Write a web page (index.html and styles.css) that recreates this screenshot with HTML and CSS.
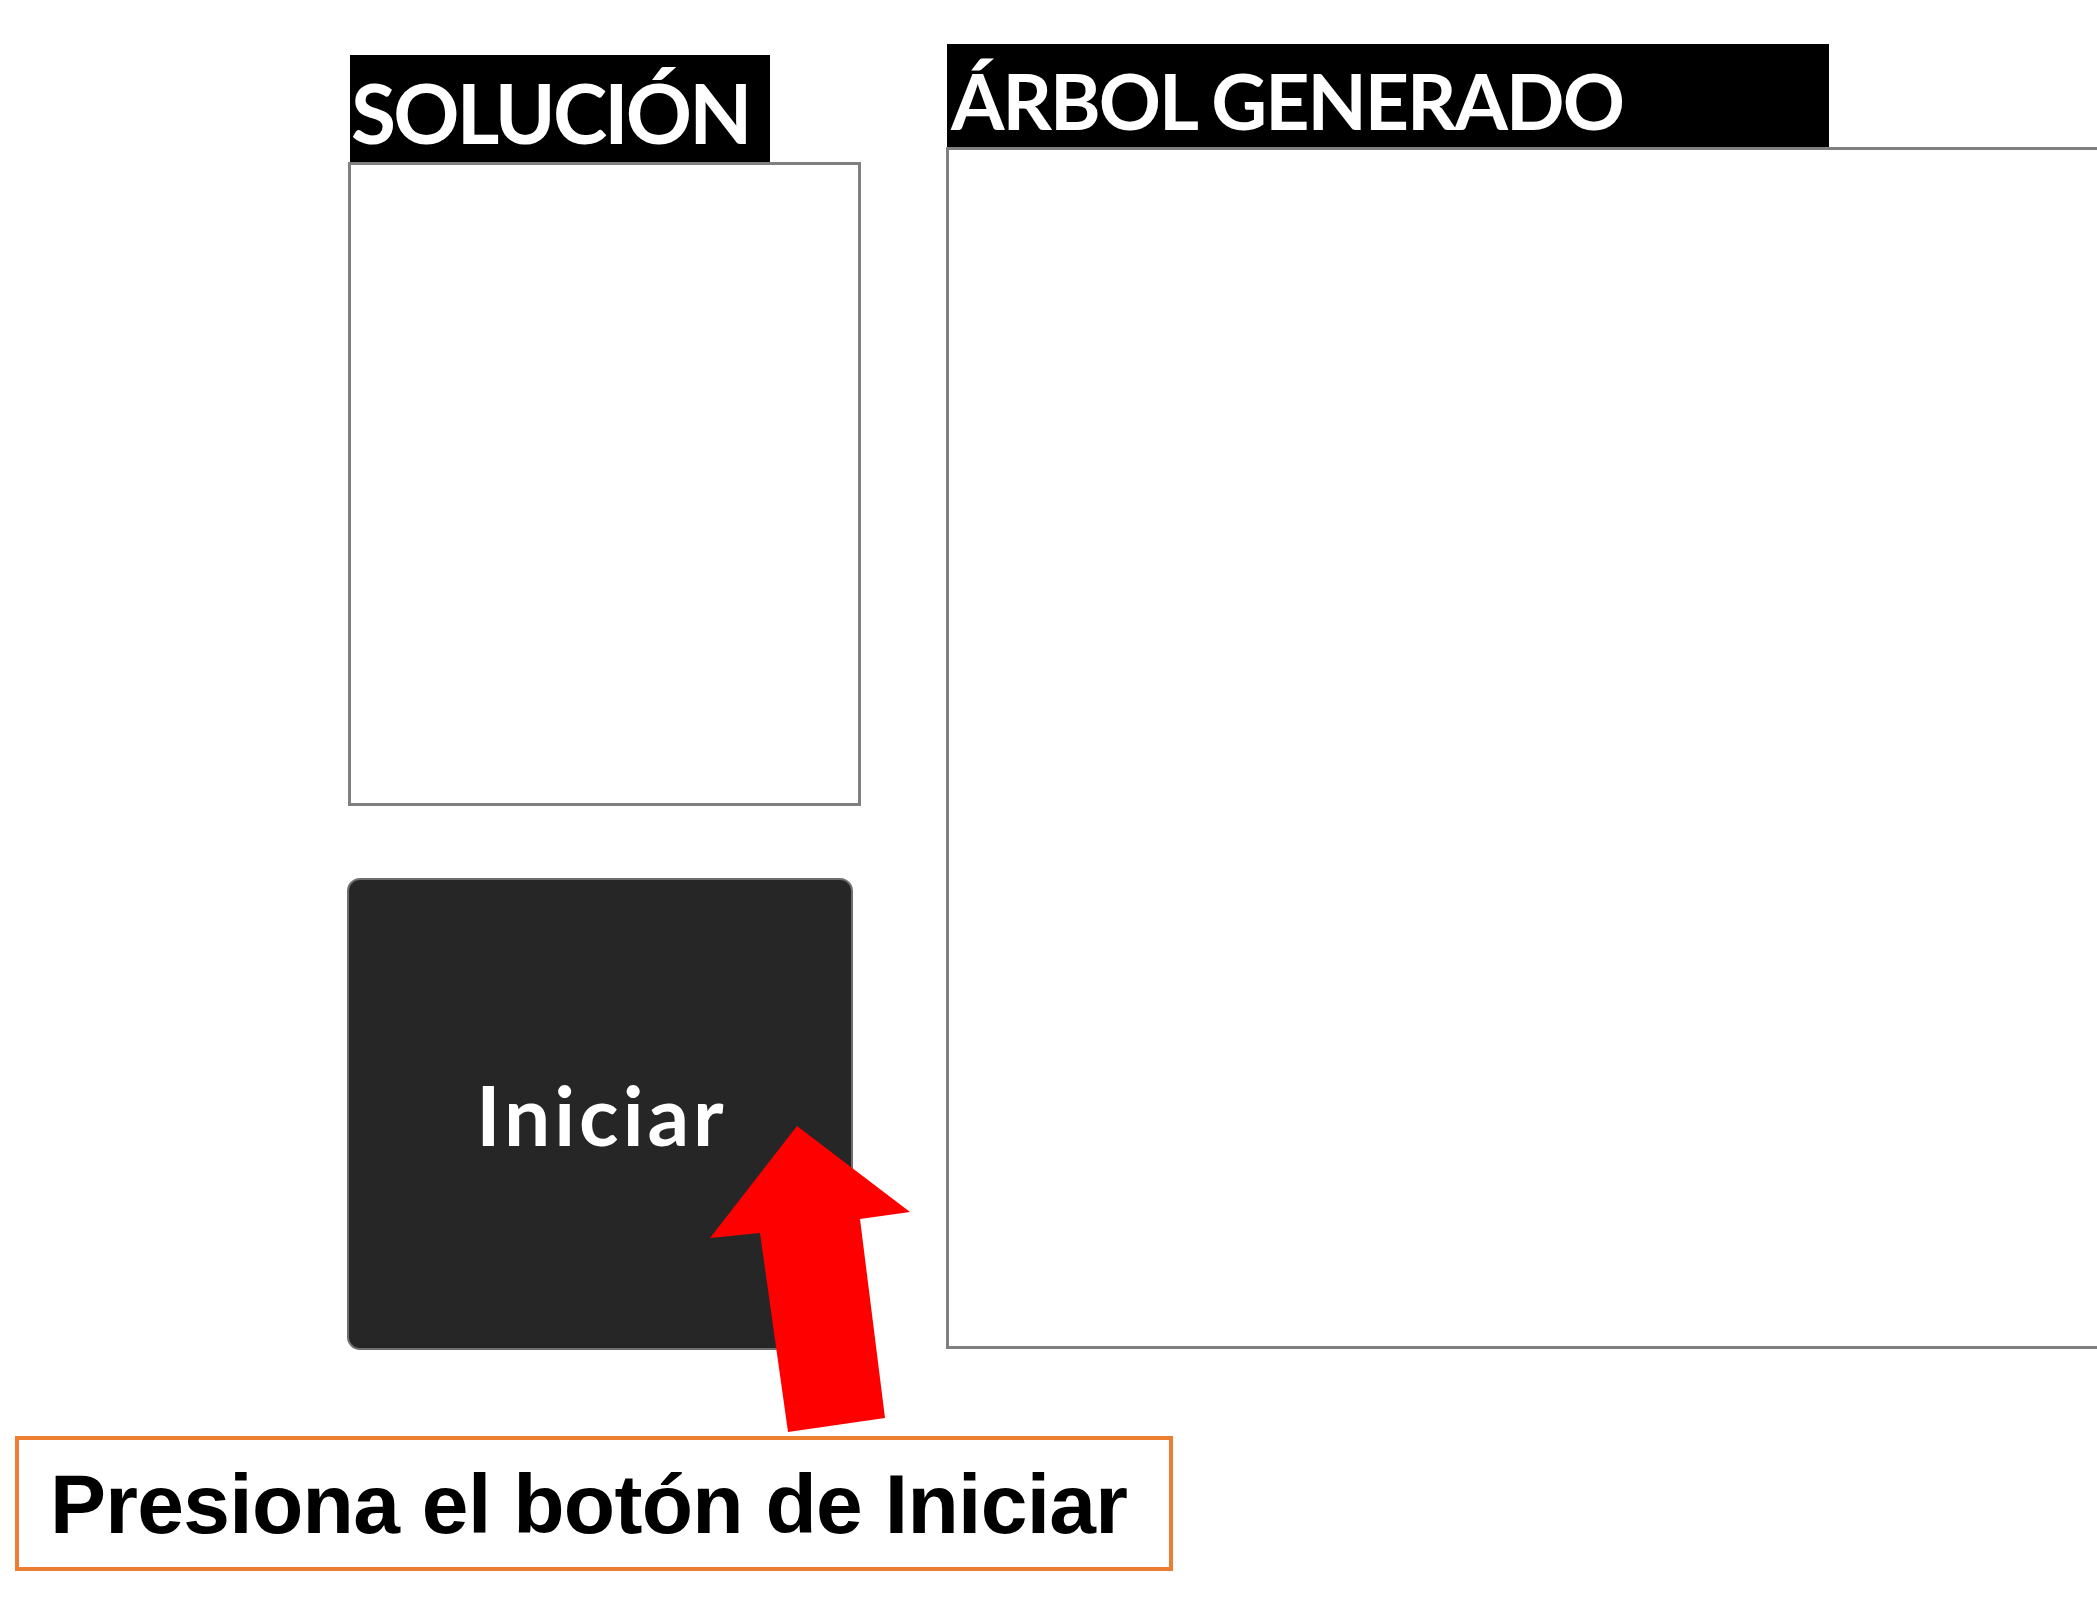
FILE: index.html
```html
<!DOCTYPE html>
<html lang="es">
  <head>
    <meta charset="UTF-8" />
    <meta name="viewport" content="width=device-width, initial-scale=1.0" />
    <title>Árbol de búsqueda</title>
    <link rel="stylesheet" href="styles.css">
  </head>
  <body>
    <div class="page">
      <div class="workspace">
        <!-- columna izquierda: solución + botón -->
        <div class="left-col">
          <div class="tag tag-solution">SOLUCIÓN</div>
          <div class="solution-box"></div>
          <button class="start-btn" type="button">Iniciar</button>
        </div>

        <!-- columna derecha: árbol -->
        <div class="right-col">
          <div class="tag tag-tree">ÁRBOL GENERADO</div>
          <div class="tree-box"></div>
        </div>
      </div>

      <div class="callout">Presiona el botón de Iniciar</div>

      <svg class="arrow" width="220" height="320" viewBox="0 0 220 320">
        <polygon points="97,6 210,92 160,99 185,298 88,312 60,113 10,118" fill="#ff0000" />
      </svg>
    </div>
  </body>
</html>
```

FILE: styles.css
```css
html,
body {
  margin: 0;
  padding: 0;
  overflow: hidden;
  background: #ffffff;
}

.page {
  position: relative;
  width: 2097px;
  height: 1602px;
}

.workspace {
  display: flex;
  align-items: flex-start;
  padding-left: 348px;
}

.left-col {
  width: 513px;
  margin-top: 55px;
  display: flex;
  flex-direction: column;
}

.right-col {
  margin-left: 85px;
  margin-top: 44px;
  display: flex;
  flex-direction: column;
}

.tag {
  box-sizing: border-box;
  background: #000000;
  color: #ffffff;
  font-family: Lato, "Open Sans", sans-serif;
  font-weight: 700;
  line-height: 1;
  white-space: nowrap;
}

.tag-solution {
  width: 420px;
  height: 107px;
  margin-left: 2px;
  padding-top: 16px;
  padding-left: 1px;
  font-size: 82px;
  letter-spacing: -2.8px;
}

.tag-tree {
  width: 882px;
  height: 103px;
  margin-left: 1px;
  padding-top: 18px;
  padding-left: 4px;
  font-size: 77px;
  letter-spacing: -2px;
}

.solution-box {
  box-sizing: border-box;
  width: 513px;
  height: 644px;
  border: 3px solid #808080;
  background: #ffffff;
}

.tree-box {
  box-sizing: border-box;
  width: 1200px;
  height: 1202px;
  border: 3px solid #808080;
  background: #ffffff;
}

.start-btn {
  box-sizing: border-box;
  width: 506px;
  height: 472px;
  margin-top: 72px;
  margin-left: -1px;
  background: #262626;
  border: 2px solid #6f6f6f;
  border-radius: 13px;
  color: #ffffff;
  font-family: Lato, "Open Sans", sans-serif;
  font-weight: 700;
  font-size: 82px;
  letter-spacing: 4px;
  padding: 0 0 0 4px;
  cursor: pointer;
}

.callout {
  box-sizing: border-box;
  width: 1158px;
  height: 135px;
  margin-top: 86px;
  margin-left: 15px;
  padding: 22px 0 0 31px;
  border: 4px solid #ed7d31;
  background: #ffffff;
  font-family: "Liberation Sans", Arial, sans-serif;
  font-weight: 700;
  font-size: 84px;
  line-height: 1;
  letter-spacing: -0.7px;
  color: #000000;
  white-space: nowrap;
}

.arrow {
  position: absolute;
  left: 700px;
  top: 1120px;
  pointer-events: none;
}
```
